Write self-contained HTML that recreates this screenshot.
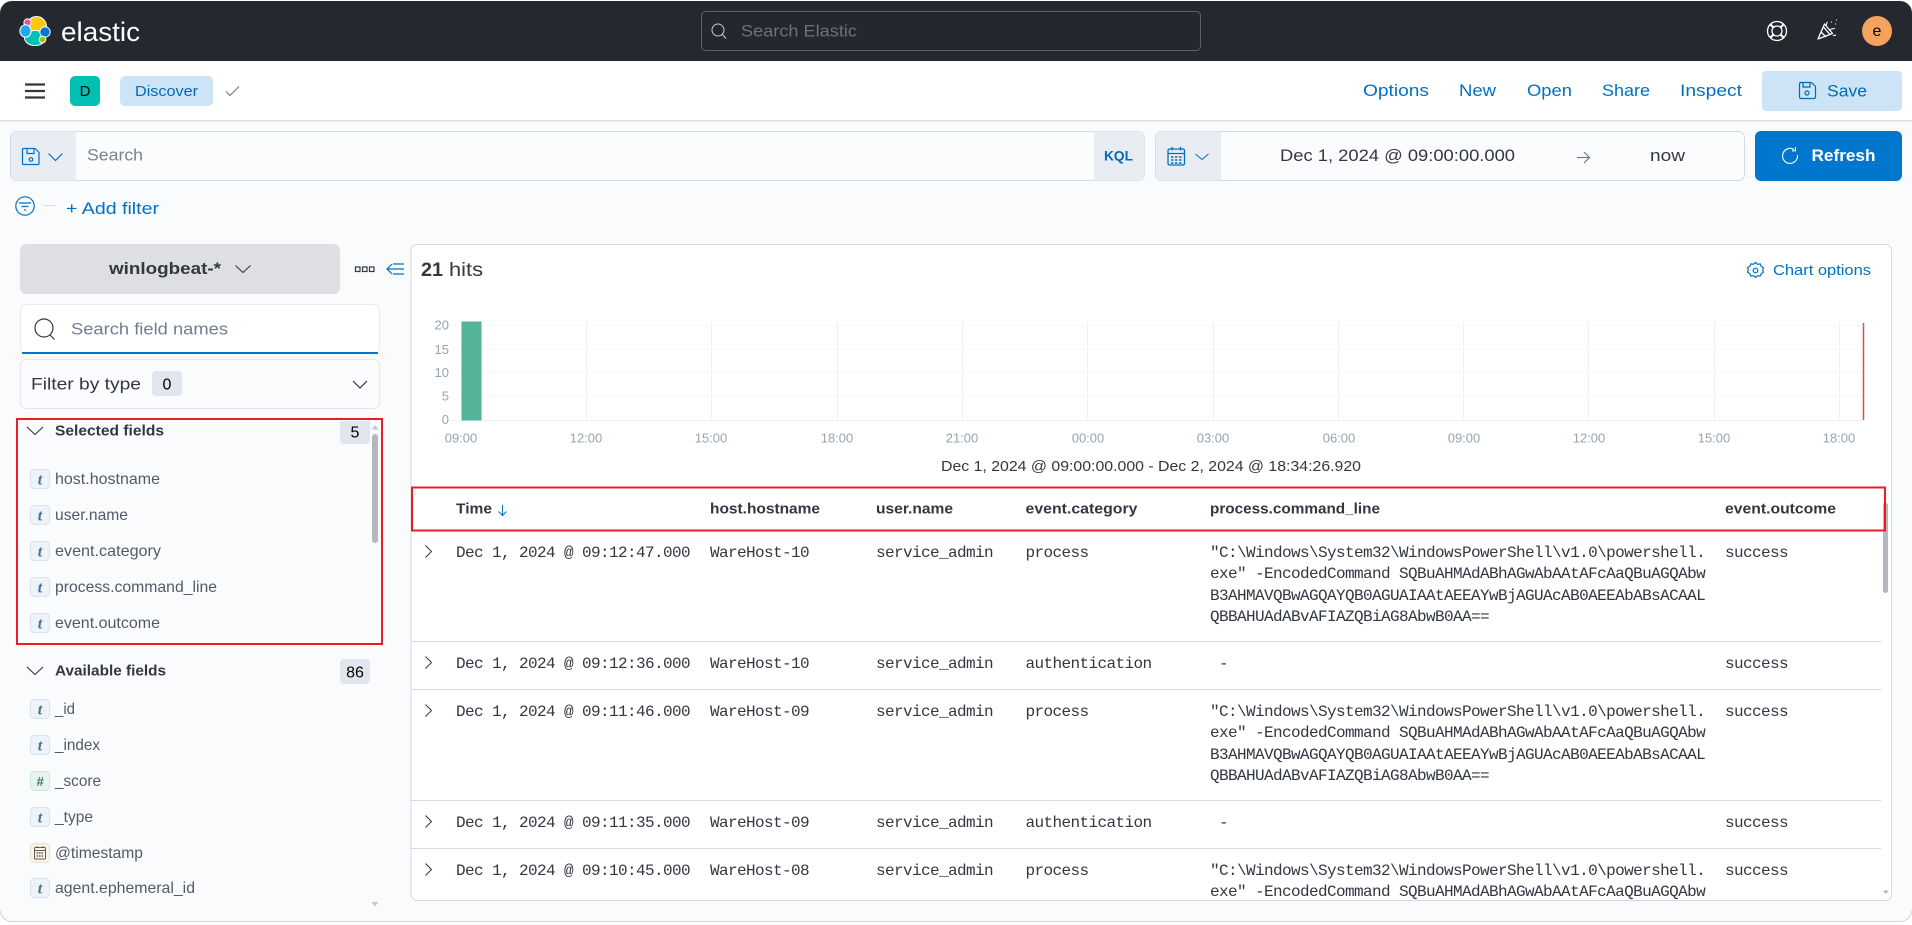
<!DOCTYPE html>
<html><head><meta charset="utf-8"><title>Discover - Elastic</title>
<style>
html,body{margin:0;padding:0;background:#fff;width:1912px;height:925px;overflow:hidden}
svg{display:block}
text{font-family:"Liberation Sans",sans-serif;white-space:pre}
.m{font-family:"Liberation Mono",monospace;font-size:16px;letter-spacing:-.6px;fill:#343741}
.b{font-weight:700;font-size:15px;fill:#343741}
.l{font-size:17px;fill:#0071c2}
.f{font-size:16px;fill:#535966}
.ax{font-size:13px;fill:#98a2b3}
.i{fill:none;stroke:#0071c2;stroke-width:1.2}
.tb{fill:#edf3f9;stroke:#d6e4f0}
.tt{font-family:"Liberation Serif",serif;font-style:italic;font-weight:700;font-size:16px;fill:#4a7194;text-anchor:middle}
</style></head><body>
<svg width="1912" height="925" viewBox="0 0 1912 925" xmlns="http://www.w3.org/2000/svg">
<defs><clipPath id="pc"><rect x="411" y="532" width="1470" height="368"/></clipPath></defs>
<rect width="1912" height="925" fill="#fff"/>
<rect x="0" y="0" width="1912" height="921.500" rx="12" fill="#fafbfd"/>
<path d="M0 910a12 12 0 0 0 12 11.500H1900a12 12 0 0 0 12-11.500" fill="none" stroke="#d3d5da"/>

<!-- top header -->
<path d="M0 61V13a12 12 0 0 1 12-12H1900a12 12 0 0 1 12 12V61Z" fill="#25282f"/>
<g stroke="#fff" stroke-width="1">
<ellipse cx="36.500" cy="26.500" rx="10" ry="10" fill="#fec514"/>
<ellipse cx="35" cy="38" rx="10.500" ry="7.500" fill="#00bfb3"/>
<circle cx="27.500" cy="22.500" r="3.600" fill="#f04e98"/>
<ellipse cx="25.500" cy="31" rx="5.600" ry="6.200" fill="#1ba9f5"/>
<ellipse cx="45" cy="32" rx="5.200" ry="5.200" fill="#0077cc"/>
<circle cx="42.500" cy="39.500" r="3.400" fill="#93c90e"/>
</g>
<text x="61" y="41" font-size="27" fill="#fff" textLength="79" lengthAdjust="spacingAndGlyphs">elastic</text>

<rect x="701.500" y="11.500" width="499" height="39" rx="4" fill="#24272e" stroke="#5d6068"/>
<circle cx="718" cy="30" r="6" fill="none" stroke="#c9cbd0" stroke-width="1"/><path d="M722.500 34.500l3.500 4" stroke="#c9cbd0" fill="none"/>
<text x="741" y="36.500" font-size="17" fill="#6e7176" textLength="116" lengthAdjust="spacingAndGlyphs">Search Elastic</text>

<g fill="none" stroke="#fff" stroke-width="1.300">
<circle cx="1777" cy="31" r="9.500"/><circle cx="1777" cy="31" r="5"/>
<path d="M1770.300 24.300l3.200 3.200M1783.700 24.300l-3.200 3.200M1770.300 37.700l3.200-3.200M1783.700 37.700l-3.200-3.200" stroke-width="2.200"/>
<path d="M1818 39l6.500-15 8 9.500Z" stroke-linejoin="round"/>
<path d="M1821 32l5 5M1823.500 27l6 7"/>
<path d="M1826 26c1-2 0-3 1.500-4M1830 30c2-2 3-1 5-1.500M1833 36c1-1 2-1 3-.5" stroke-width="1.100"/>
<path d="M1831 22h1M1835 24h1M1836 20h1" stroke-width="1"/>
</g>
<circle cx="1877" cy="31" r="15" fill="#f5a35c"/>
<text x="1877" y="36" font-size="16" fill="#000" text-anchor="middle">e</text>

<!-- nav bar -->
<rect x="0" y="61" width="1912" height="59" fill="#fff"/>
<rect x="0" y="120" width="1912" height="1" fill="#d5d9e2"/>
<rect x="0" y="121" width="1912" height="1" fill="#eceff4"/>
<rect x="0" y="122" width="1912" height="1" fill="#f5f6f9"/>
<path d="M25 84.500h20M25 91h20M25 97.500h20" stroke="#343741" stroke-width="2.200"/>
<rect x="70" y="76" width="30" height="30" rx="5" fill="#00bfb3"/>
<text x="85" y="96" font-size="15" fill="#000" text-anchor="middle">D</text>
<rect x="120" y="76" width="93" height="30" rx="5" fill="#cce4f5"/>
<text x="135" y="96" font-size="15" fill="#006bb4" textLength="63" lengthAdjust="spacingAndGlyphs">Discover</text>
<path d="M226 91.500l4 4 9-9" fill="none" stroke="#69707d" stroke-width="1"/>

<text class="l" x="1363" y="96" textLength="66" lengthAdjust="spacingAndGlyphs">Options</text>
<text class="l" x="1459" y="96" textLength="37" lengthAdjust="spacingAndGlyphs">New</text>
<text class="l" x="1527" y="96" textLength="45" lengthAdjust="spacingAndGlyphs">Open</text>
<text class="l" x="1602" y="96" textLength="48" lengthAdjust="spacingAndGlyphs">Share</text>
<text class="l" x="1680" y="96" textLength="62" lengthAdjust="spacingAndGlyphs">Inspect</text>
<rect x="1762" y="71" width="140" height="40" rx="4" fill="#cce4f5"/>
<g fill="none" stroke="#006bb4" stroke-width="1.200">
<path d="M1799.500 82.500h12l4 4v10.500a1.500 1.500 0 0 1-1.500 1.500h-13a1.500 1.500 0 0 1-1.500-1.500v-13a1.500 1.500 0 0 1 1.500-1.500Z"/>
<path d="M1803 82.500v4.500h7v-4.500"/><circle cx="1807" cy="93" r="2"/>
</g>
<text x="1827" y="96.500" font-size="17" fill="#006bb4" textLength="40" lengthAdjust="spacingAndGlyphs">Save</text>

<!-- query bar -->
<rect x="10.500" y="131.500" width="1134" height="49" rx="6" fill="#fbfcfd" stroke="#d3dae6"/>
<path d="M11 137.500a6 6 0 0 1 6-6H76V180.500H17a6 6 0 0 1-6-6Z" fill="#e9edf3"/>
<path d="M1094 131.500h45a5.500 5.500 0 0 1 5.500 5.500v38a5.500 5.500 0 0 1-5.500 5.500h-45Z" fill="#e9edf3"/>
<g class="i">
<path d="M23.500 148.500h11.500l4 4v11a1 1 0 0 1-1 1h-14.500a1 1 0 0 1-1-1v-14a1 1 0 0 1 1-1Z"/>
<path d="M27 148.500v5h7v-5"/><circle cx="31" cy="159.500" r="1.800"/>
<path d="M48.500 153.500l7 7 7-7"/>
</g>
<text x="87" y="160.500" font-size="17" fill="#7c8290" textLength="56" lengthAdjust="spacingAndGlyphs">Search</text>
<text x="1104" y="160.500" font-size="13.500" font-weight="700" fill="#006bb4" textLength="29" lengthAdjust="spacingAndGlyphs">KQL</text>

<rect x="1155.500" y="131.500" width="589" height="49" rx="6" fill="#fbfcfd" stroke="#d3dae6"/>
<path d="M1156 137.500a6 6 0 0 1 6-6H1221V180.500H1162a6 6 0 0 1-6-6Z" fill="#e9edf3"/>
<g class="i">
<rect x="1168" y="149" width="16.500" height="16" rx="1.500" stroke-width="1.300"/>
<path d="M1168 153.500h16.500M1172 147v3.500M1180.500 147v3.500" stroke-width="1.300"/>
<path d="M1171 157h11M1171 160h11M1171 163h11" stroke-dasharray="2.500 1.500" stroke-width="1.500"/>
<path d="M1195.500 154l6.500 5.500 6.500-5.500" stroke-width="1"/>
</g>
<text x="1280" y="161" font-size="17" fill="#343741" textLength="235" lengthAdjust="spacingAndGlyphs">Dec 1, 2024 @ 09:00:00.000</text>
<path d="M1577 157.500h12.500M1584 152l5.500 5.500-5.500 5.500" fill="none" stroke="#69707d" stroke-width="1.100"/>
<text x="1650" y="161" font-size="17" fill="#343741" textLength="35" lengthAdjust="spacingAndGlyphs">now</text>
<rect x="1755" y="131" width="147" height="50" rx="6" fill="#0077cc"/>
<path d="M1794 149.500a7.500 7.500 0 1 0 3.500 5.500M1795.500 147v3.800h-3.500" fill="none" stroke="#fff" stroke-width="1.100"/>
<text x="1811.500" y="161" font-size="17" font-weight="700" fill="#fff" textLength="64" lengthAdjust="spacingAndGlyphs">Refresh</text>

<!-- filter row -->
<circle cx="25" cy="206" r="9.200" class="i"/>
<path d="M19 203h12M21.500 206.500h7M24 210h2" class="i"/>
<path d="M43 205.500h12" stroke="#d3dae6" stroke-width="1"/>
<text class="l" x="66" y="214" textLength="93" lengthAdjust="spacingAndGlyphs">+ Add filter</text>

<!-- sidebar -->
<rect x="20" y="244" width="320" height="50" rx="6" fill="#dedfe3"/>
<text x="109" y="274" font-size="17" font-weight="700" fill="#343741" textLength="112" lengthAdjust="spacingAndGlyphs">winlogbeat-*</text>
<path d="M235.500 265.500l7.500 7 7.500-7" fill="none" stroke="#343741" stroke-width="1.100"/>
<g fill="none" stroke="#343741" stroke-width="1.200">
<rect x="355.500" y="267" width="4.500" height="4.500"/><rect x="362.500" y="267" width="4.500" height="4.500"/><rect x="369.500" y="267" width="4.500" height="4.500"/>
</g>
<g fill="none" stroke="#0071c2" stroke-width="1.200"><path d="M392 264l-5 5 5 5M387 269h17M393 264h11M393 274h11"/></g>

<rect x="20.500" y="304.500" width="359" height="49" rx="6" fill="#fff" stroke="#e7ebf2"/>
<path d="M22 353h356" stroke="#0077cc" stroke-width="2"/>
<circle cx="44" cy="328" r="9" fill="none" stroke="#343741" stroke-width="1.200"/><path d="M50 335l4.500 4.500" stroke="#343741" stroke-width="1.200" fill="none"/>
<text x="71" y="334.500" font-size="17" fill="#6f7f92" textLength="157" lengthAdjust="spacingAndGlyphs">Search field names</text>

<rect x="20.500" y="359.500" width="359" height="49" rx="6" fill="#fbfcfd" stroke="#e3e7ef"/>
<text x="31" y="389.500" font-size="17" fill="#343741" textLength="110" lengthAdjust="spacingAndGlyphs">Filter by type</text>
<rect x="152" y="371" width="30" height="25" rx="4" fill="#e0e5ee"/>
<text x="167" y="389.500" font-size="16" fill="#000" text-anchor="middle">0</text>
<path d="M353 381l7 7 7-7" fill="none" stroke="#343741" stroke-width="1.200"/>

<rect x="340" y="421" width="30" height="23" rx="4" fill="#e0e5ee"/><rect x="340" y="421" width="30" height="6" fill="#e0e5ee"/>
<text x="355" y="437.500" font-size="16" fill="#000" text-anchor="middle">5</text>
<path d="M27 427l8 7.500 8-7.500" fill="none" stroke="#343741" stroke-width="1.100"/>
<text class="b" x="55" y="435.500" textLength="109" lengthAdjust="spacingAndGlyphs">Selected fields</text>
<path d="M375 425l3.500 4.500h-7Z" fill="#c3c6cd"/>
<rect x="372" y="434" width="6" height="109" rx="3" fill="#b4b7c0"/>

<rect class="tb" x="30.500" y="469.500" width="19" height="19" rx="4"/><text class="tt" x="40" y="484.500">t</text>
<text class="f" x="55" y="484" textLength="105" lengthAdjust="spacingAndGlyphs">host.hostname</text>
<rect class="tb" x="30.500" y="505.500" width="19" height="19" rx="4"/><text class="tt" x="40" y="520.500">t</text>
<text class="f" x="55" y="520" textLength="73" lengthAdjust="spacingAndGlyphs">user.name</text>
<rect class="tb" x="30.500" y="541.500" width="19" height="19" rx="4"/><text class="tt" x="40" y="556.500">t</text>
<text class="f" x="55" y="556" textLength="106" lengthAdjust="spacingAndGlyphs">event.category</text>
<rect class="tb" x="30.500" y="577.500" width="19" height="19" rx="4"/><text class="tt" x="40" y="592.500">t</text>
<text class="f" x="55" y="592" textLength="162" lengthAdjust="spacingAndGlyphs">process.command_line</text>
<rect class="tb" x="30.500" y="613.500" width="19" height="19" rx="4"/><text class="tt" x="40" y="628.500">t</text>
<text class="f" x="55" y="628" textLength="105" lengthAdjust="spacingAndGlyphs">event.outcome</text>

<rect x="17" y="419" width="365" height="225" fill="none" stroke="#ed1c24" stroke-width="2"/>

<path d="M27 667l8 7.500 8-7.500" fill="none" stroke="#343741" stroke-width="1.100"/>
<text class="b" x="55" y="675.500" textLength="111" lengthAdjust="spacingAndGlyphs">Available fields</text>
<rect x="340" y="659" width="30" height="25" rx="4" fill="#e0e5ee"/>
<text x="355" y="677.500" font-size="16" fill="#000" text-anchor="middle">86</text>

<rect class="tb" x="30.500" y="699.500" width="19" height="19" rx="4"/><text class="tt" x="40" y="714.500">t</text>
<text class="f" x="55" y="714" textLength="20" lengthAdjust="spacingAndGlyphs">_id</text>
<rect class="tb" x="30.500" y="735.500" width="19" height="19" rx="4"/><text class="tt" x="40" y="750.500">t</text>
<text class="f" x="55" y="750" textLength="45" lengthAdjust="spacingAndGlyphs">_index</text>
<rect x="30.500" y="771.500" width="19" height="19" rx="4" fill="#e6f4f0" stroke="#d0e8df"/>
<text x="40" y="786" font-family="Liberation Sans" font-style="italic" font-weight="700" font-size="13" fill="#3d7b66" text-anchor="middle">#</text>
<text class="f" x="55" y="786" textLength="46" lengthAdjust="spacingAndGlyphs">_score</text>
<rect class="tb" x="30.500" y="807.500" width="19" height="19" rx="4"/><text class="tt" x="40" y="822.500">t</text>
<text class="f" x="55" y="822" textLength="38" lengthAdjust="spacingAndGlyphs">_type</text>
<rect x="30.500" y="843.500" width="19" height="19" rx="4" fill="#f6f2e9" stroke="#e9e3d6"/>
<g fill="none" stroke="#6b5c44"><rect x="34.500" y="847.500" width="11" height="11.500" rx="1"/><path d="M34.500 850.500h11M37 846v2M43 846v2"/><path d="M36.500 853h7M36.500 856h7" stroke-dasharray="1.500 1" stroke-width="1.400"/></g>
<text class="f" x="55" y="858" textLength="88" lengthAdjust="spacingAndGlyphs">@timestamp</text>
<rect class="tb" x="30.500" y="878.500" width="19" height="19" rx="4"/><text class="tt" x="40" y="893.500">t</text>
<text class="f" x="55" y="893" textLength="140" lengthAdjust="spacingAndGlyphs">agent.ephemeral_id</text>
<path d="M375 906.500l3.500-4.500h-7Z" fill="#c3c6cd"/>

<!-- main panel -->
<rect x="411" y="244.500" width="1480.500" height="656" rx="6" fill="#fff" stroke="#d3dae6"/>
<text x="421" y="276" font-size="19" font-weight="700" fill="#343741" textLength="22" lengthAdjust="spacingAndGlyphs">21</text>
<text x="449" y="276" font-size="19" fill="#343741" textLength="34" lengthAdjust="spacingAndGlyphs">hits</text>
<g class="i"><path d="M1755.500 262.500l2 1.800 2.700-.4 1 2.500 2.300 1.400-.8 2.200.8 2.200-2.300 1.400-1 2.500-2.700-.4-2 1.800-2-1.800-2.700.4-1-2.500-2.300-1.400.8-2.200-.8-2.200 2.300-1.400 1-2.500 2.700.4Z" stroke-linejoin="round"/><circle cx="1755.500" cy="270.500" r="2.300"/></g>
<text x="1773" y="275" font-size="15" fill="#0071c2" textLength="98" lengthAdjust="spacingAndGlyphs">Chart options</text>

<!-- chart -->
<g stroke="#eef0f3" fill="none">
<path d="M481 325.500H1863M481 349.500H1863M481 372.500H1863M481 396.500H1863" stroke-dasharray="4 4"/>
<path d="M586.500 321V420M711.500 321V420M837.500 321V420M962.500 321V420M1087.500 321V420M1213.500 321V420M1338.500 321V420M1463.500 321V420M1588.500 321V420M1714.500 321V420M1839.500 321V420"/>
<path d="M449 420.500H1864"/>
</g>
<rect x="461.500" y="321.500" width="20" height="99" fill="#54b399" stroke="#a6d8c9" stroke-width=".6"/>
<path d="M1863.500 323V420" stroke="#e5484d" stroke-width="1.500"/>
<g>
<text class="ax" text-anchor="end" x="449" y="329.500">20</text><text class="ax" text-anchor="end" x="449" y="354">15</text><text class="ax" text-anchor="end" x="449" y="377">10</text><text class="ax" text-anchor="end" x="449" y="400.500">5</text><text class="ax" text-anchor="end" x="449" y="424">0</text>
</g>
<g text-anchor="middle">
<text class="ax" x="461" y="442.500">09:00</text><text class="ax" x="586" y="442.500">12:00</text><text class="ax" x="711" y="442.500">15:00</text><text class="ax" x="837" y="442.500">18:00</text><text class="ax" x="962" y="442.500">21:00</text><text class="ax" x="1088" y="442.500">00:00</text><text class="ax" x="1213" y="442.500">03:00</text><text class="ax" x="1339" y="442.500">06:00</text><text class="ax" x="1464" y="442.500">09:00</text><text class="ax" x="1589" y="442.500">12:00</text><text class="ax" x="1714" y="442.500">15:00</text><text class="ax" x="1839" y="442.500">18:00</text>
</g>
<text x="941" y="471" font-size="15" fill="#343741" textLength="420" lengthAdjust="spacingAndGlyphs">Dec 1, 2024 @ 09:00:00.000 - Dec 2, 2024 @ 18:34:26.920</text>

<!-- table scrollbar -->
<rect x="1883" y="503" width="5" height="90" rx="2.500" fill="#b4b7c0"/>
<path d="M1883 890.500h6l-3 3.500Z" fill="#b4b7c0"/>

<!-- table header -->
<text class="b" x="456" y="513.500" textLength="36" lengthAdjust="spacingAndGlyphs">Time</text>
<path d="M502.500 505v10M498.500 511.500l4 4 4-4" fill="none" stroke="#0071c2" stroke-width="1"/>
<text class="b" x="710" y="513.500" textLength="110" lengthAdjust="spacingAndGlyphs">host.hostname</text>
<text class="b" x="876" y="513.500" textLength="77" lengthAdjust="spacingAndGlyphs">user.name</text>
<text class="b" x="1025.500" y="513.500" textLength="112" lengthAdjust="spacingAndGlyphs">event.category</text>
<text class="b" x="1210" y="513.500" textLength="170" lengthAdjust="spacingAndGlyphs">process.command_line</text>
<text class="b" x="1725" y="513.500" textLength="111" lengthAdjust="spacingAndGlyphs">event.outcome</text>
<rect x="412" y="487.500" width="1473" height="43" fill="none" stroke="#ed1c24" stroke-width="2"/>

<!-- rows -->
<g clip-path="url(#pc)">
<path d="M411 641.500H1881M411 689.500H1881M411 800.500H1881M411 848.500H1881" stroke="#d3dae6"/>
<g fill="none" stroke="#343741" stroke-width="1">
<path d="M425.500 545.500l6 6-6 6M425.500 656.500l6 6-6 6M425.500 704.500l6 6-6 6M425.500 815.500l6 6-6 6M425.500 863.500l6 6-6 6"/>
</g>

<text class="m" x="456" y="557">Dec 1, 2024 @ 09:12:47.000</text><text class="m" x="710" y="557">WareHost-10</text><text class="m" x="876" y="557">service_admin</text><text class="m" x="1025.500" y="557">process</text><text class="m" x="1725" y="557">success</text>
<text class="m" x="1210" y="557">"C:\Windows\System32\WindowsPowerShell\v1.0\powershell.</text>
<text class="m" x="1210" y="578">exe" -EncodedCommand SQBuAHMAdABhAGwAbAAtAFcAaQBuAGQAbw</text>
<text class="m" x="1210" y="600">B3AHMAVQBwAGQAYQB0AGUAIAAtAEEAYwBjAGUAcAB0AEEAbABsACAAL</text>
<text class="m" x="1210" y="621">QBBAHUAdABvAFIAZQBiAG8AbwB0AA==</text>

<text class="m" x="456" y="668">Dec 1, 2024 @ 09:12:36.000</text><text class="m" x="710" y="668">WareHost-10</text><text class="m" x="876" y="668">service_admin</text><text class="m" x="1025.500" y="668">authentication</text><text class="m" x="1219" y="668">-</text><text class="m" x="1725" y="668">success</text>

<text class="m" x="456" y="716">Dec 1, 2024 @ 09:11:46.000</text><text class="m" x="710" y="716">WareHost-09</text><text class="m" x="876" y="716">service_admin</text><text class="m" x="1025.500" y="716">process</text><text class="m" x="1725" y="716">success</text>
<text class="m" x="1210" y="716">"C:\Windows\System32\WindowsPowerShell\v1.0\powershell.</text>
<text class="m" x="1210" y="737">exe" -EncodedCommand SQBuAHMAdABhAGwAbAAtAFcAaQBuAGQAbw</text>
<text class="m" x="1210" y="759">B3AHMAVQBwAGQAYQB0AGUAIAAtAEEAYwBjAGUAcAB0AEEAbABsACAAL</text>
<text class="m" x="1210" y="780">QBBAHUAdABvAFIAZQBiAG8AbwB0AA==</text>

<text class="m" x="456" y="827">Dec 1, 2024 @ 09:11:35.000</text><text class="m" x="710" y="827">WareHost-09</text><text class="m" x="876" y="827">service_admin</text><text class="m" x="1025.500" y="827">authentication</text><text class="m" x="1219" y="827">-</text><text class="m" x="1725" y="827">success</text>

<text class="m" x="456" y="875">Dec 1, 2024 @ 09:10:45.000</text><text class="m" x="710" y="875">WareHost-08</text><text class="m" x="876" y="875">service_admin</text><text class="m" x="1025.500" y="875">process</text><text class="m" x="1725" y="875">success</text>
<text class="m" x="1210" y="875">"C:\Windows\System32\WindowsPowerShell\v1.0\powershell.</text>
<text class="m" x="1210" y="896">exe" -EncodedCommand SQBuAHMAdABhAGwAbAAtAFcAaQBuAGQAbw</text>
</g>
</svg>
</body></html>
